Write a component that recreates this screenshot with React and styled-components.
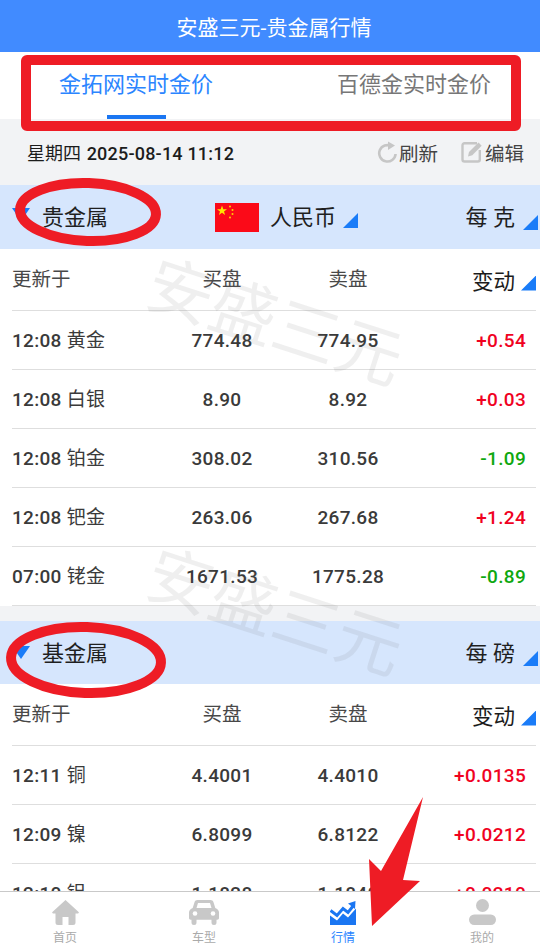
import React from 'react'
import styled, { createGlobalStyle } from 'styled-components'

const GlobalStyle = createGlobalStyle`
  html, body { margin: 0; padding: 0; background: #fff; }
  * { box-sizing: border-box; }
  body { font-family: Roboto, "Noto Sans CJK SC", sans-serif; }
`

const Page = styled.div`
  position: relative;
  width: 540px;
  height: 948px;
  overflow: hidden;
  display: flex;
  flex-direction: column;
  background: #f2f3f5;
`

const Header = styled.header`
  flex: none;
  height: 52px;
  padding-left: 8px;
  background: #418bff;
  color: #fff;
  font-size: 21px;
  display: flex;
  align-items: center;
  justify-content: center;
`

const Tabs = styled.nav`
  flex: none;
  height: 67px;
  background: #fff;
  display: flex;
  justify-content: space-between;
  padding: 0 49px 0 59px;
`

const Tab = styled.div`
  position: relative;
  width: 154px;
  padding-top: 17px;
  font-size: 22px;
  line-height: 32px;
  color: ${p => (p.$active ? '#2b85ff' : '#777')};
  white-space: nowrap;
  ${p => p.$active && `
    &:after {
      content: '';
      position: absolute;
      left: 48px;
      bottom: 0;
      width: 59px;
      height: 4px;
      background: #1a76f2;
    }
  `}
`

const Toolbar = styled.div`
  flex: none;
  height: 66px;
  padding: 0 16px 0 27px;
  display: flex;
  align-items: center;
  justify-content: space-between;
`

const DateText = styled.div`
  font-size: 18px;
  font-weight: 500;
  letter-spacing: 0.2px;
  color: #1c1c1c;
  span { font-weight: 400; letter-spacing: 0; margin-right: 1px; }
`

const Actions = styled.div`
  display: flex;
  gap: 23px;
`

const Action = styled.div`
  display: flex;
  align-items: center;
  gap: 2px;
  font-size: 19.5px;
  color: #444;
`

const Content = styled.main`
  flex: 1;
  min-height: 0;
  overflow: hidden;
`

const SectionHead = styled.div`
  height: ${p => (p.$tall ? 64 : 63)}px;
  padding-bottom: ${p => (p.$tall ? 4 : 3)}px;
  background: #d6e6fd;
  position: relative;
  display: flex;
  align-items: center;
  padding-left: 42px;
  font-size: 22px;
  color: #1f1f1f;
  white-space: nowrap;
`

const Title = styled.div`
  width: 173px;
`

const Flag = styled.svg`
  width: 44px;
  height: 29px;
  margin: 5px 11px 0 0;
  display: block;
`

const Unit = styled.div`
  display: flex;
  align-items: center;
  position: relative;
  padding-right: 25px;
  ${p => p.$end && 'margin-left: auto;'}
  ${p => !p.$end && 'flex: none;'}
`

const Corner = styled.i`
  position: absolute;
  right: ${p => p.$right ?? 2}px;
  bottom: ${p => p.$bottom ?? 1}px;
  width: 15px;
  height: 15px;
  background: #1a7cf8;
  clip-path: polygon(100% 0, 100% 100%, 0 100%);
`

const Caret = styled.i`
  position: absolute;
  left: 12px;
  top: ${p => p.$top}px;
  width: 18px;
  height: 13px;
  background: #1a7cf8;
  clip-path: polygon(0 0, 100% 0, 50% 100%);
`

const Table = styled.section`
  background: #fff;
  padding-left: 12px;
  margin-bottom: 15px;
`

const Row = styled.div`
  display: grid;
  grid-template-columns: 147px 126px 126px 115px;
  align-items: center;
  height: ${p => (p.$head ? 62 : 59)}px;
  padding-bottom: ${p => (p.$head ? 5 : 3)}px;
  margin-right: 4px;
  border-bottom: 1px solid #dedede;
  font-size: 19px;
  font-weight: 500;
  color: #3a3a3a;
  letter-spacing: 0.3px;
  ${p => p.$head && 'font-weight: 400; font-size: 19.5px; color: #484848; letter-spacing: 0;'}
`

const Name = styled.div`
  font-weight: ${p => (p.$head ? 400 : 500)};
  white-space: nowrap;
  span { font-weight: 400; }
`

const ColLabel = styled.div`
  text-align: center;
`

const Price = styled.div`
  text-align: center;
  padding-top: 4px;
`

const Change = styled.div`
  text-align: right;
  padding-top: 4px;
  color: ${p => (p.$up ? '#f0021f' : '#0fa80f')};
`

const SortHead = styled.div`
  position: relative;
  text-align: right;
  padding-right: 11px;
  color: #1c1c1c;
  font-size: 21.5px;
  padding-top: 4px;
`

const Watermark = styled.div`
  position: absolute;
  left: ${p => p.$left}px;
  top: ${p => p.$top}px;
  transform: rotate(18deg);
  transform-origin: left center;
  font-size: 66px;
  line-height: 80px;
  color: rgba(110, 110, 110, 0.11);
  white-space: nowrap;
  pointer-events: none;
`

const TabBar = styled.footer`
  position: relative;
  z-index: 1;
  flex: none;
  height: 57px;
  background: #fff;
  border-top: 1px solid #c9c9c9;
  display: flex;
  gap: 79px;
  padding-left: 35px;
`

const BarItem = styled.div`
  width: 60px;
  display: flex;
  flex-direction: column;
  align-items: center;
  padding-top: ${p => p.$top ?? 8}px;
  font-size: 12px;
  line-height: 14px;
  color: ${p => (p.$active ? '#2b85ff' : '#aaa')};
  svg { display: block; margin-bottom: 6px; }
`

const Marks = styled.svg`
  position: absolute;
  left: 0;
  top: 0;
  z-index: 2;
  pointer-events: none;
`

const RedMarks = () => (
  <Marks width="540" height="948" viewBox="0 0 540 948">
    <rect x="26" y="60" width="490" height="66" rx="1" fill="none" stroke="#ee1c25" strokeWidth="10" />
    <ellipse cx="88" cy="212" rx="68" ry="29" fill="none" stroke="#ee1c25" strokeWidth="10" transform="rotate(2 88 212)" />
    <ellipse cx="86" cy="660" rx="75" ry="33" fill="none" stroke="#ee1c25" strokeWidth="10" transform="rotate(2 86 660)" />
    <polygon points="423,797 403,880 420,881 372,926 369,859 381,871" fill="#ee1c25" />
  </Marks>
)

const ChinaFlag = () => (
  <Flag viewBox="0 0 44 29">
    <rect width="44" height="29" fill="#fb0a18" />
    <polygon points="7,2.5 8.3,6.2 12,6.2 9,8.5 10.1,12 7,9.8 3.9,12 5,8.5 2,6.2 5.7,6.2" fill="#ffe600" />
    <circle cx="15" cy="3.5" r="1" fill="#ffd400" />
    <circle cx="17.5" cy="7" r="1" fill="#ffd400" />
    <circle cx="17.5" cy="11" r="1" fill="#ffd400" />
    <circle cx="15" cy="14.5" r="1" fill="#ffd400" />
  </Flag>
)

const RefreshIcon = () => (
  <svg width="20" height="22" viewBox="0 0 20 22">
    <path d="M14.5 5.2A8.2 8.2 0 1 0 18.6 13" fill="none" stroke="#c6c6c6" strokeWidth="2.6" />
    <polygon points="11,0.5 18,4.5 11,9" fill="#c6c6c6" />
  </svg>
)

const EditIcon = () => (
  <svg width="22" height="22" viewBox="0 0 22 22">
    <path d="M16 2.2H3.5A2 2 0 0 0 1.5 4.2v14.3a2 2 0 0 0 2 2h13.3a2 2 0 0 0 2-2V9" fill="none" stroke="#c6c6c6" strokeWidth="2.4" />
    <path d="M7 15.5l1-4.5L17.5 1.5l3.2 3.2L11.3 14.3z" fill="#c6c6c6" />
  </svg>
)

const HomeIcon = () => (
  <svg width="27" height="25" viewBox="0 0 27 25">
    <path d="M13.5 0L0.4 12c-.5.6-.1 1.5.7 1.5H3.5v9A2.5 2.5 0 0 0 6 25h4.5V17h6v8H21a2.5 2.5 0 0 0 2.5-2.5v-9h2.4c.8 0 1.2-.9.7-1.5z" fill="#c8c8c8" />
  </svg>
)

const CarIcon = () => (
  <svg width="30" height="25" viewBox="0 0 30 25">
    <path d="M8.5 0h13c1.4 0 2.6.9 3 2.2L26.3 8c2 .8 3.7 2.3 3.7 4.3V18c0 1-.7 1.7-1.7 1.7h-.8v2.8a2.5 2.5 0 0 1-5 0v-2.8H7.5v2.8a2.5 2.5 0 0 1-5 0v-2.8h-.8C.7 19.7 0 19 0 18v-5.7C0 10.3 1.7 8.8 3.7 8l1.8-5.8C5.9.9 7.1 0 8.5 0z" fill="#c8c8c8" />
    <path d="M9 3h12l1.5 5h-15z" fill="#fff" />
    <circle cx="6" cy="13.5" r="2.3" fill="#fff" />
    <circle cx="24" cy="13.5" r="2.3" fill="#fff" />
  </svg>
)

const ChartIcon = () => (
  <svg width="26" height="24" viewBox="0 0 26 24">
    <path d="M0 24V14.5l7 5 6-7 5 4 8-9V24z" fill="#1a76f2" />
    <path d="M0.5 9.5l6.5 5 6-7 5 4 5.5-7" fill="none" stroke="#1a76f2" strokeWidth="3" />
    <polygon points="18,2.5 25.5,0 25,8" fill="#1a76f2" />
  </svg>
)

const UserIcon = () => (
  <svg width="27" height="26" viewBox="0 0 27 26">
    <circle cx="13.5" cy="6.5" r="6.5" fill="#c8c8c8" />
    <rect x="0" y="15.5" width="27" height="10.5" rx="5.2" fill="#c8c8c8" />
  </svg>
)

const preciousRows = [
  { time: '12:08', name: '黄金', buy: '774.48', sell: '774.95', change: '+0.54', up: true },
  { time: '12:08', name: '白银', buy: '8.90', sell: '8.92', change: '+0.03', up: true },
  { time: '12:08', name: '铂金', buy: '308.02', sell: '310.56', change: '-1.09', up: false },
  { time: '12:08', name: '钯金', buy: '263.06', sell: '267.68', change: '+1.24', up: true },
  { time: '07:00', name: '铑金', buy: '1671.53', sell: '1775.28', change: '-0.89', up: false },
]

const baseRows = [
  { time: '12:11', name: '铜', buy: '4.4001', sell: '4.4010', change: '+0.0135', up: true },
  { time: '12:09', name: '镍', buy: '6.8099', sell: '6.8122', change: '+0.0212', up: true },
  { time: '12:10', name: '铝', buy: '1.1828', sell: '1.1840', change: '+0.0210', up: true },
]

const PriceTable = ({ rows }) => (
  <Table>
    <Row $head>
      <Name $head>更新于</Name>
      <ColLabel>买盘</ColLabel>
      <ColLabel>卖盘</ColLabel>
      <SortHead>变动<Corner $right={-10} $bottom={4} /></SortHead>
    </Row>
    {rows.map(r => (
      <Row key={r.name}>
        <Name>{r.time} <span>{r.name}</span></Name>
        <Price>{r.buy}</Price>
        <Price>{r.sell}</Price>
        <Change $up={r.up}>{r.change}</Change>
      </Row>
    ))}
  </Table>
)

const App = () => (
  <Page>
    <GlobalStyle />
    <Header>安盛三元-贵金属行情</Header>
    <Tabs>
      <Tab $active>金拓网实时金价</Tab>
      <Tab>百德金实时金价</Tab>
    </Tabs>
    <Toolbar>
      <DateText><span>星期四</span> 2025-08-14 11:12</DateText>
      <Actions>
        <Action><RefreshIcon />刷新</Action>
        <Action><EditIcon />编辑</Action>
      </Actions>
    </Toolbar>
    <Content>
      <SectionHead $tall>
        <Caret $top={23} />
        <Title>贵金属</Title>
        <ChinaFlag />
        <Unit>人民币<Corner $right={3} $bottom={3} /></Unit>
        <Unit $end>每 克<Corner /></Unit>
      </SectionHead>
      <PriceTable rows={preciousRows} />
      <SectionHead>
        <Caret $top={25} />
        <Title>基金属</Title>
        <Unit $end>每 磅<Corner /></Unit>
      </SectionHead>
      <PriceTable rows={baseRows} />
    </Content>
    <Watermark $left={149} $top={243}>安盛三元</Watermark>
    <Watermark $left={149} $top={533}>安盛三元</Watermark>
    <TabBar>
      <BarItem><HomeIcon />首页</BarItem>
      <BarItem><CarIcon />车型</BarItem>
      <BarItem $active $top={9}><ChartIcon />行情</BarItem>
      <BarItem $top={7}><UserIcon />我的</BarItem>
    </TabBar>
    <RedMarks />
  </Page>
)

export default App
